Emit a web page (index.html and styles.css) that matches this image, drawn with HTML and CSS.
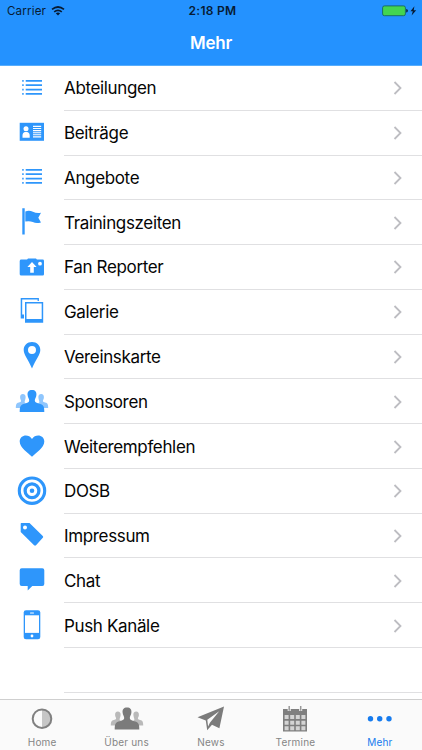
FILE: index.html
```
<!DOCTYPE html>
<html lang="de">
<head>
<meta charset="utf-8">
<title>Mehr</title>
<link rel="stylesheet" href="styles.css">
</head>
<body>
<div class="app">
<header>
  <div class="status">
    <div class="carrier"><span>Carrier</span><svg width="14" height="10" viewBox="0 0 14 10" fill="none" stroke="#071b33" stroke-width="1.7"><path d="M1 3.4Q7-1.4 13 3.4M3.2 5.8Q7 2.8 10.8 5.8"/><path d="M4.8 7.3Q7 5.6 9.2 7.3L7 9.6z" fill="#071b33" stroke="none"/></svg></div>
    <time>2:18 PM</time>
    <div class="battery"><svg width="36" height="12" viewBox="0 0 36 12"><rect x=".6" y=".9" width="22.8" height="9.8" rx="1.8" fill="#43d551" stroke="#17685e" stroke-width=".9"/><path d="M24.2 4q1.7 0 1.7 1.8t-1.7 1.8z" fill="#0a2540"/><path d="M32.4 1.2L28.5 6.3h2.3l-1.2 4.3 4.6-5.4h-2.5z" fill="#071b33"/></svg></div>
  </div>
  <h1>Mehr</h1>
</header>
<main>
  <div class="row"><svg class="icon" viewBox="0 0 40 44.78"><path d="M10.2 14.9h1.5M10.2 19.2h1.5M10.2 23.6h1.5M10.2 27.9h1.5M13.7 14.9H30M13.7 19.2H30M13.7 23.6H30M13.7 27.9H30" stroke="#2e96fb" stroke-width="1.7"/></svg><div class="cell"><span>Abteilungen</span><svg class="chev" viewBox="0 0 10 14"><path d="M1.5 1l6 6-6 6"/></svg></div></div>
  <div class="row"><svg class="icon" viewBox="0 0 40 44.78"><rect x="7.7" y="12.8" width="24.3" height="18"/><g fill="#fff"><circle cx="14" cy="18.8" r="2.5"/><path d="M10.5 27.8v-2.2q0-3.1 2.3-3.6h2.4q2.5.5 2.5 3.6v2.2z"/></g><path d="M21 16.4h8.2M21 18.5h8.2M21 20.6h8.2M21 22.7h8.2M21 24.8h8.2M21 26.9h8.2" stroke="#fff" stroke-width="1.1"/></svg><div class="cell"><span>Beiträge</span><svg class="chev" viewBox="0 0 10 14"><path d="M1.5 1l6 6-6 6"/></svg></div></div>
  <div class="row"><svg class="icon" viewBox="0 0 40 44.78"><path d="M10.2 14.9h1.5M10.2 19.2h1.5M10.2 23.6h1.5M10.2 27.9h1.5M13.7 14.9H30M13.7 19.2H30M13.7 23.6H30M13.7 27.9H30" stroke="#2e96fb" stroke-width="1.7"/></svg><div class="cell"><span>Angebote</span><svg class="chev" viewBox="0 0 10 14"><path d="M1.5 1l6 6-6 6"/></svg></div></div>
  <div class="row"><svg class="icon" viewBox="0 0 40 44.78"><path d="M10.3 8.3h2.4v26.2h-2.4z"/><path d="M13.3 11.4q4-1.4 7.6.4t8.1 1l-2.7 4.9 2.7 4.7q-4.7 1.3-8.2-.3t-7.5-.5z"/></svg><div class="cell"><span>Trainingszeiten</span><svg class="chev" viewBox="0 0 10 14"><path d="M1.5 1l6 6-6 6"/></svg></div></div>
  <div class="row"><svg class="icon" viewBox="0 0 40 44.78"><path d="M9.3 14.6h5.8l.9-1.1h8l.9 1.1h5.8q1.3 0 1.3 1.3v13.3q0 1.3-1.3 1.3H9.3q-1.6 0-1.6-1.3V15.9q0-1.3 1.6-1.3z"/><path d="M20 17l4.6 5h-2.8v5.8h-3.6V22h-2.8z" fill="#fff"/><circle cx="28" cy="18.7" r="1.9" fill="#fff"/></svg><div class="cell"><span>Fan Reporter</span><svg class="chev" viewBox="0 0 10 14"><path d="M1.5 1l6 6-6 6"/></svg></div></div>
  <div class="row"><svg class="icon" viewBox="0 0 40 44.78"><path fill-rule="evenodd" d="M8.7 9h18.2v3.1h-1.3v-1.7H10.2v15.2h1.8v3.800H8.700zM13 13h18.200v20.700H13zm1.500 1.500v15.500h15.200v-15.500z"/></svg><div class="cell"><span>Galerie</span><svg class="chev" viewBox="0 0 10 14"><path d="M1.5 1l6 6-6 6"/></svg></div></div>
  <div class="row"><svg class="icon" viewBox="0 0 40 44.78"><path fill-rule="evenodd" d="M20 8c-4.8 0-8.3 3.4-8.3 7.9C11.7 20.5 16 25 20 34.5 24 25 28.3 20.5 28.3 15.9 28.3 11.4 24.8 8 20 8zm0 3.9a4 4 0 110 8 4 4 0 010-8z"/></svg><div class="cell"><span>Vereinskarte</span><svg class="chev" viewBox="0 0 10 14"><path d="M1.5 1l6 6-6 6"/></svg></div></div>
  <div class="row"><svg class="icon" viewBox="0 0 40 44.78"><g fill="#8fc6fd"><path id="side" d="M10.8 15c2 0 3 1.3 2.8 3.5-.1 2-.9 3.1-1 4.4 0 1.4 3.2 1.3 3.2 3.2V29H3.8c0-2.5.2-4.5 2-5.2 1.7-.7 3.3-.6 3.300-1.800 0-1-.9-1.700-1-3.500C8 16.300 8.900 15 10.800 15z"/><use href="#side" transform="matrix(-1 0 0 1 40 0)"/></g><path d="M20 11.100c3.300 0 4.700 2 4.400 5-.2 2.700-1.600 3.800-1.600 5.400 0 3.200 5.600 2.600 7.900 4.700 1.500 1.300 1.600 4 1.600 6.700H7.700c0-2.700.1-5.400 1.600-6.700 2.300-2.100 7.900-1.500 7.900-4.700 0-1.600-1.400-2.700-1.600-5.400-.3-3 1.100-5 4.400-5z"/></svg><div class="cell"><span>Sponsoren</span><svg class="chev" viewBox="0 0 10 14"><path d="M1.5 1l6 6-6 6"/></svg></div></div>
  <div class="row"><svg class="icon" viewBox="0 0 40 44.78"><path d="M20 32.7C16 29 7.700 23.700 7.700 17.600c0-7.200 9-8.200 12.300-2.700 3.300-5.500 12.300-4.500 12.300 2.700 0 6.100-8.300 11.400-12.300 15.100z"/></svg><div class="cell"><span>Weiterempfehlen</span><svg class="chev" viewBox="0 0 10 14"><path d="M1.5 1l6 6-6 6"/></svg></div></div>
  <div class="row"><svg class="icon" viewBox="0 0 40 44.78"><g fill="none" stroke="#2e96fb"><circle cx="20" cy="21.7" r="12.7" stroke-width="3.1"/><circle cx="20" cy="21.7" r="6.9" stroke-width="3.3"/></g><circle cx="20" cy="21.7" r="2.3"/></svg><div class="cell"><span>DOSB</span><svg class="chev" viewBox="0 0 10 14"><path d="M1.5 1l6 6-6 6"/></svg></div></div>
  <div class="row"><svg class="icon" viewBox="0 0 40 44.78"><path fill-rule="evenodd" d="M9.3 10.1h8.200L30.800 22.900q.9.900 0 1.800l-6.800 7.600q-.9.900-1.900 0L8.700 19v-8.200q0-.7.6-.7zM13 12.500a2 2 0 100 4 2 2 0 000-4z"/></svg><div class="cell"><span>Impressum</span><svg class="chev" viewBox="0 0 10 14"><path d="M1.5 1l6 6-6 6"/></svg></div></div>
  <div class="row"><svg class="icon" viewBox="0 0 40 44.78"><path d="M9.700 10.200h20.600q2 0 2 2v13.700q0 2-2 2H20.300l-4.600 4.700v-4.700h-6q-2 0-2-2V12.200q0-2 2-2z"/></svg><div class="cell"><span>Chat</span><svg class="chev" viewBox="0 0 10 14"><path d="M1.5 1l6 6-6 6"/></svg></div></div>
  <div class="row"><svg class="icon" viewBox="0 0 40 44.78"><rect x="11.7" y="7.3" width="16.6" height="28.900" rx="2.300"/><g fill="#fff"><path d="M13 12.300h14v17.600H13z"/><rect x="18" y="9.600" width="4" height="1" rx=".5"/><circle cx="20" cy="33" r="1.400"/></g></svg><div class="cell"><span>Push Kanäle</span><svg class="chev" viewBox="0 0 10 14"><path d="M1.5 1l6 6-6 6"/></svg></div></div>
  <div class="row"><div class="icon"></div><div class="cell"></div></div>
</main>
<nav>
  <a><svg viewBox="0 0 40 30"><path d="M20 5.500a9.200 9.200 0 010 18.400z" fill="#c6c6c6"/><circle cx="20" cy="14.700" r="9.300" fill="none" stroke="#808080" stroke-width="2"/></svg><span>Home</span></a>
  <a><svg viewBox="0 0 40 30"><g transform="translate(0 -7.500)"><use href="#side" fill="#b9b9b9"/><use href="#side" fill="#b9b9b9" transform="matrix(-1 0 0 1 40 0)"/><path d="M20 11.100c3.300 0 4.700 2 4.400 5-.2 2.700-1.600 3.800-1.600 5.400 0 3.200 5.600 2.600 7.900 4.700 1.500 1.300 1.600 4 1.600 6.700H7.700c0-2.700.1-5.400 1.600-6.700 2.300-2.100 7.900-1.500 7.900-4.700 0-1.600-1.400-2.700-1.600-5.400-.3-3 1.100-5 4.400-5z" fill="#7b7b7b"/></g></svg><span>Über uns</span></a>
  <a><svg viewBox="0 0 40 30"><path fill-rule="evenodd" d="M33 2.500L28.400 24.200 21 20.700l-4.800 5.500-1.400-9.700-8.300-3.300zM16.300 15.800l.8 6.600 1.800-3.700 9.300-11.500z" fill="#7b7b7b"/></svg><span>News</span></a>
  <a><svg viewBox="0 0 40 30"><path d="M8 5h24v22.500H8z" fill="#7f7f7f"/><path d="M14.200 2v5M25.700 2v5" stroke="#fafafa" stroke-width="3"/><path d="M14.200 2v4.700M25.700 2v4.700" stroke="#999" stroke-width="1.500"/><g stroke="#d4d4d4" stroke-width="4" stroke-dasharray="4 1.600"><path d="M9.600 13H30.400M9.600 18.700H30.400M9.600 24.300H30.400"/></g></svg><span>Termine</span></a>
  <a class="active"><svg viewBox="0 0 40 30"><g fill="#167bee"><circle cx="10.500" cy="14.700" r="2.700"/><circle cx="19.700" cy="14.700" r="2.700"/><circle cx="29" cy="14.700" r="2.700"/></g></svg><span>Mehr</span></a>
</nav>
</div>
</body>
</html>
```
FILE: styles.css
```
* { box-sizing: border-box; }
body { margin: 0; background: #fff; font-family: Inter, "Liberation Sans", sans-serif; color: #050505; }
.app { width: 422px; height: 750px; display: flex; flex-direction: column; overflow: hidden; }
header { height: 66px; flex: none; background: #2492ff; border-bottom: 1px solid #57adfc; }
.status { height: 22px; display: grid; grid-template-columns: 1fr auto 1fr; align-items: center; padding: 0 4px 0 7px; font-size: 11.6px; color: #071b33; }
.carrier { display: flex; align-items: center; gap: 5px; letter-spacing: .15px; }
.status time { font-weight: 600; font-size: 12px; line-height: 14px; padding-bottom: 1px; letter-spacing: .3px; color: #071b33; }
.battery { display: flex; justify-content: flex-end; }
h1 { margin: 0; text-align: center; color: #fff; font-size: 17px; line-height: 42px; font-weight: 600; letter-spacing: -.2px; }
main { height: 633.3px; flex: none; overflow: hidden; }
.row { height: 44.78px; display: flex; padding-left: 12px; }
.icon { width: 40px; height: 44.78px; margin-top: -.4px; flex: none; fill: #2e96fb; }
.cell { flex: 1; margin-left: 12px; border-bottom: 1px solid #e0e0e2; display: flex; align-items: center; justify-content: space-between; padding: 1px 19px 0 0; font-size: 17px; letter-spacing: -.35px; white-space: nowrap; }
.chev { width: 10px; height: 14px; fill: none; stroke: #bdbdc2; stroke-width: 1.8; }
nav { flex: 1; border-top: 1px solid #cfcfcf; background: #fafafa; display: flex; }
nav a { flex: 1; display: flex; flex-direction: column; align-items: center; padding-top: 4px; font-size: 10px; color: #858585; letter-spacing: .2px; }
nav svg { width: 40px; height: 30px; flex: none; }
nav span { line-height: 14px; margin-top: 1px; }
nav .active { color: #167bee; }
```
